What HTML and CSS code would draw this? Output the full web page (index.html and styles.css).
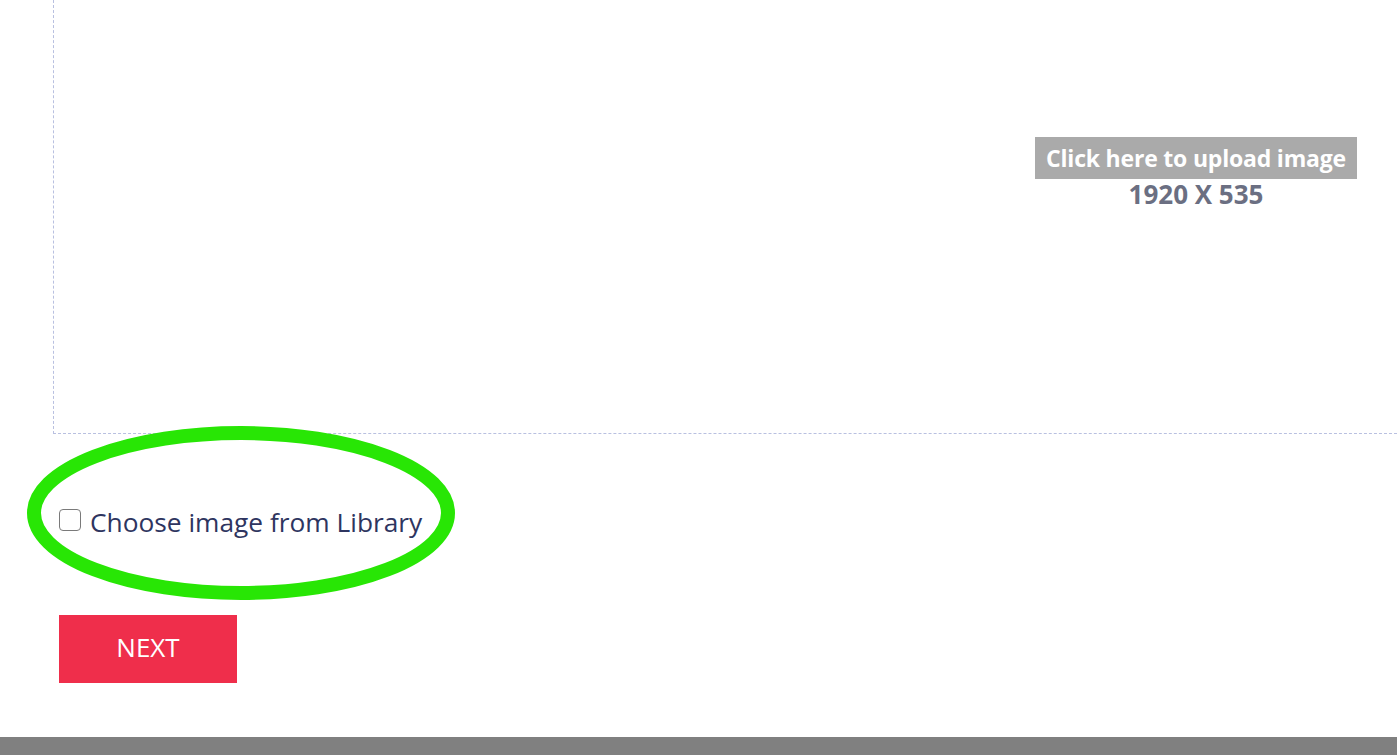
FILE: index.html
```html
<!doctype html>
<html>
  <head>
    <meta name="viewport" content="width=device-width, initial-scale=1.0" />
    <title>Banner Upload</title>
    <link rel="stylesheet" href="styles.css">
  </head>
  <body>
    <div class="page">
      <div class="dropzone">
        <div class="upload">
          <span class="upload-btn">Click here to upload image</span>
          <div class="upload-size">1920 X 535</div>
        </div>
      </div>

      <div class="library">
        <label class="library-label">
          <input type="checkbox" class="library-check" />
          <span>Choose image from Library</span>
        </label>
        <svg class="highlight" width="432" height="178" viewBox="0 0 432 178">
          <ellipse cx="215" cy="88" rx="207" ry="80" fill="none" stroke="#28e605" stroke-width="14" />
        </svg>
      </div>

      <button class="next">NEXT</button>
    </div>
    <div class="footer"></div>
  </body>
</html>
```

FILE: styles.css
```css
html,
body {
  margin: 0;
  background: #fff;
  font-family: 'Open Sans', 'Noto Sans', sans-serif;
  overflow: hidden;
}

.page {
  height: 737px;
  padding-left: 53px;
  display: flex;
  flex-direction: column;
}

.dropzone {
  height: 434px;
  border-left: 1px dashed #b9c0e0;
  border-bottom: 1px dashed #b9c0e0;
  flex-shrink: 0;
  box-sizing: border-box;
  display: flex;
  justify-content: flex-end;
}

.upload {
  width: 402px;
  padding-top: 137px;
  text-align: center;
}

.upload-btn {
  display: inline-block;
  background: #aaaaaa;
  color: #fff;
  font-weight: 700;
  font-size: 23px;
  line-height: 42px;
  padding: 0 11px;
  letter-spacing: -0.2px;
}

.upload-size {
  color: #6b6f82;
  font-weight: 700;
  font-size: 26px;
  line-height: 30px;
}

.library {
  position: relative;
  height: 181px;
}

.library-label {
  position: relative;
  display: flex;
  align-items: center;
  gap: 9px;
  margin-top: 73px;
  margin-left: 6px;
  color: #2e3560;
  font-size: 26.3px;
  line-height: 30px;
  cursor: pointer;
}

.library-check {
  appearance: none;
  width: 22px;
  height: 22px;
  margin: -5px 0 0 0;
  border: 1.5px solid #7a7a7a;
  border-radius: 4px;
  background: #fff;
  box-sizing: border-box;
}

.highlight {
  position: absolute;
  left: -27px;
  top: -9px;
  pointer-events: none;
}

.next {
  width: 178px;
  height: 68px;
  margin-left: 6px;
  padding: 0 0 4px;
  border: none;
  background: #ef2e4b;
  color: #fff;
  font-family: inherit;
  font-size: 26px;
  cursor: pointer;
}

.footer {
  height: 18px;
  background: #808080;
}
```
